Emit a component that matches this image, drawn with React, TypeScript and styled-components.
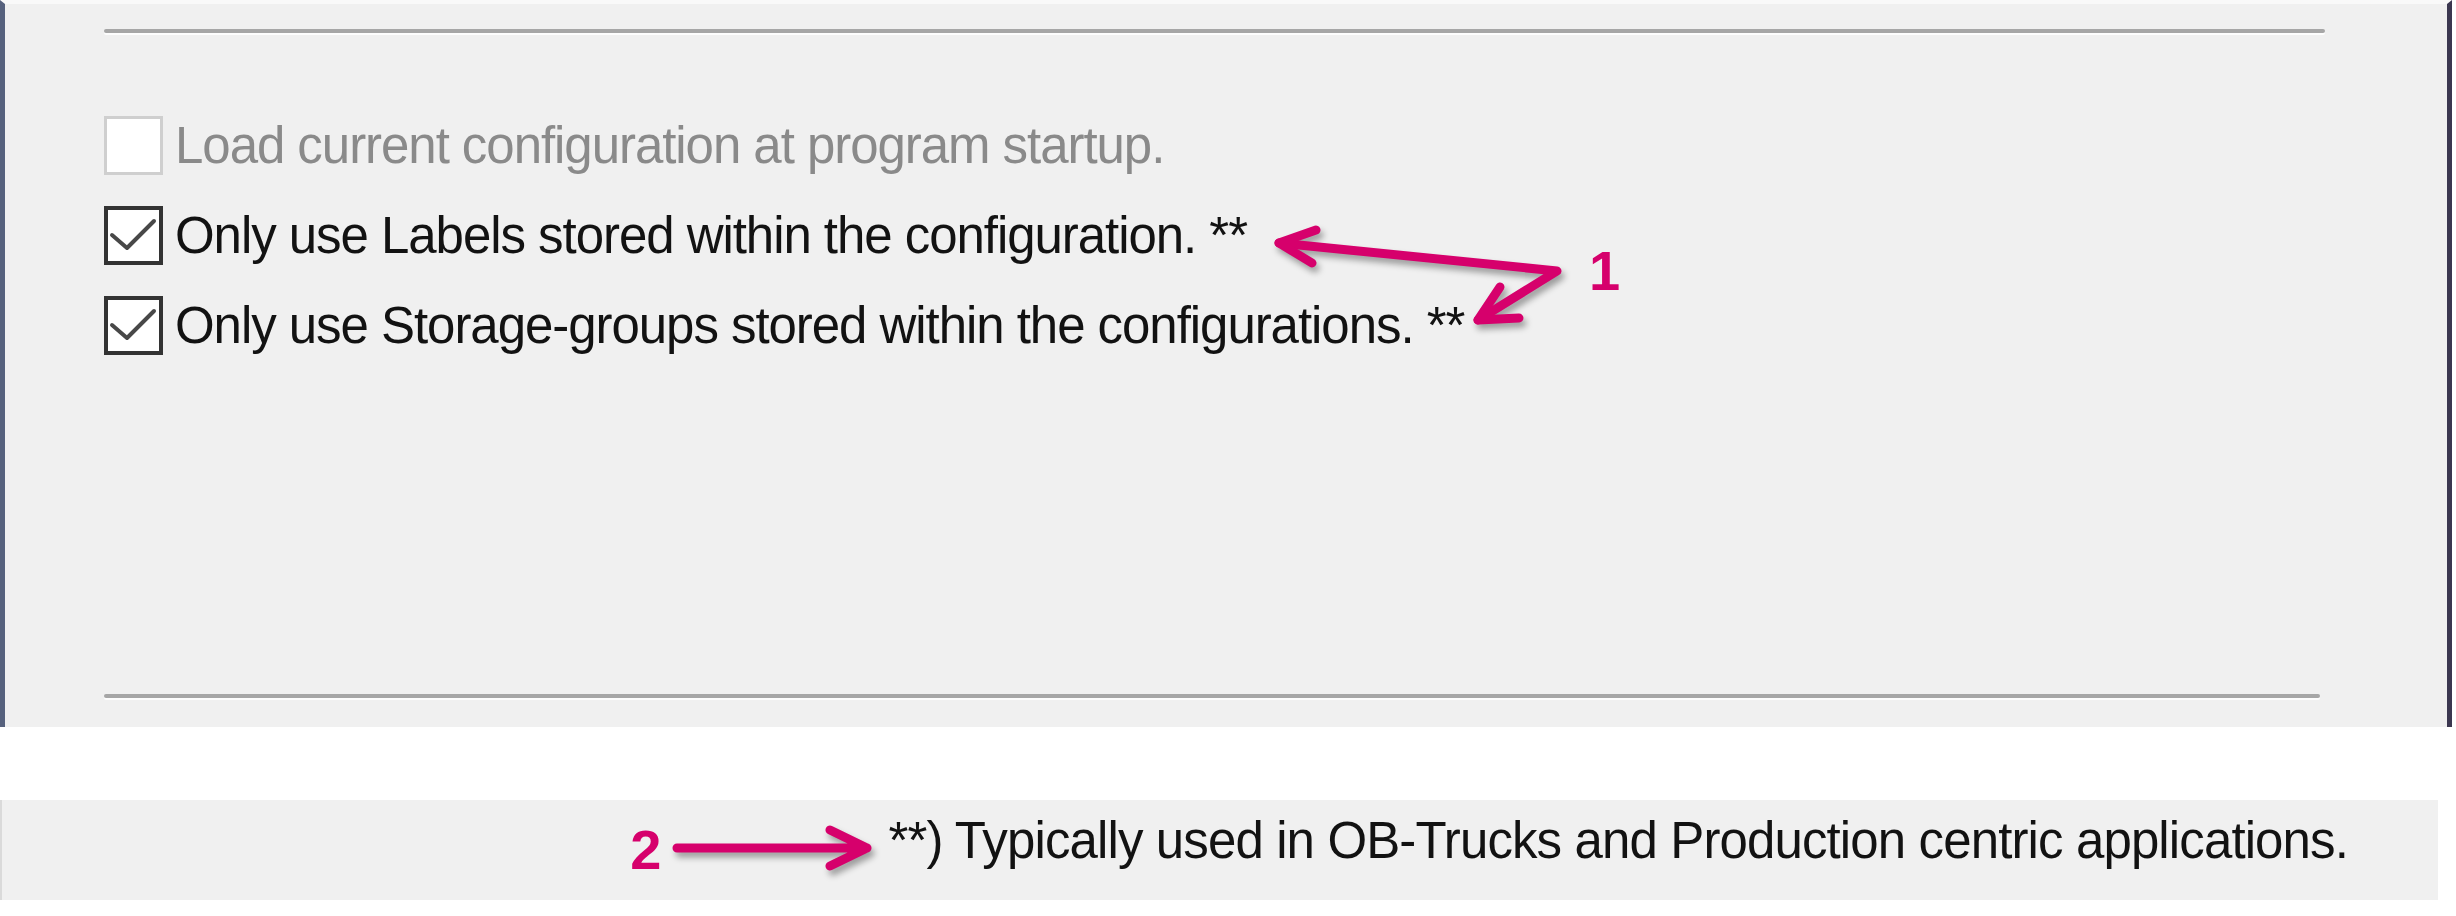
import styled, { createGlobalStyle } from "styled-components";

const ACCENT = "#d6006c";

const GlobalStyle = createGlobalStyle`
  html, body {
    margin: 0;
    padding: 0;
    background: #ffffff;
  }
  body {
    font-family: "Liberation Sans", Arial, sans-serif;
  }
`;

const Page = styled.div`
  width: 2456px;
  height: 916px;
  display: flex;
  flex-direction: column;
  gap: 73px;
  overflow: hidden;
`;

const Panel = styled.section`
  position: relative;
  box-sizing: border-box;
  width: 2452px;
  height: 727px;
  display: flex;
  flex-direction: column;
  padding: 25px 122px 29px 99px;
  background: #f0f0f0;
  border-top: 4px solid #f9f9f9;
  border-left: 5px solid #56617d;
  border-right: 5px solid #3b3750;
`;

const Separator = styled.hr<{ $trim?: number }>`
  margin: 0 ${(p) => p.$trim ?? 0}px 0 0;
  height: 4px;
  border: 0;
  border-radius: 2px;
  background: #a6a6a6;
  box-shadow: 0 2px 0 #fdfdfd;
`;

const OptionList = styled.ul`
  list-style: none;
  margin: 67px 0 0;
  padding: 0;
  display: flex;
  flex-direction: column;
  flex: 1;
`;

const Option = styled.li`
  height: 90px;
  display: flex;
  align-items: center;
  gap: 12px;
`;

const Box = styled.span<{ $disabled?: boolean }>`
  box-sizing: border-box;
  flex: none;
  width: 59px;
  height: 59px;
  display: flex;
  background: #ffffff;
  border: ${(p) => (p.$disabled ? "3px solid #cfcfcf" : "4px solid #333333")};
`;

const Tick = styled.svg`
  width: 100%;
  height: 100%;
`;

const Label = styled.span<{ $disabled?: boolean }>`
  font-size: 51px;
  letter-spacing: -1.05px;
  white-space: nowrap;
  color: ${(p) => (p.$disabled ? "#8a8a8a" : "#121212")};
`;

const Marker = styled.span`
  font-weight: 700;
  font-size: 56px;
  line-height: 1;
  color: ${ACCENT};
`;

const CalloutNumber = styled(Marker)`
  position: absolute;
  left: 1584px;
  top: 239px;
`;

const CalloutArrows = styled.svg`
  position: absolute;
  left: 1250px;
  top: 211px;
  overflow: visible;
  filter: drop-shadow(3px 5px 3px rgba(0, 0, 0, 0.35));
`;

const FootnoteBar = styled.footer`
  box-sizing: border-box;
  width: 2438px;
  height: 100px;
  display: flex;
  align-items: center;
  justify-content: flex-end;
  gap: 11px;
  padding-right: 90px;
  background: #f0f0f0;
  border-left: 2px solid #dadada;
`;

const FootArrow = styled.svg`
  flex: none;
  overflow: visible;
  filter: drop-shadow(3px 5px 3px rgba(0, 0, 0, 0.35));
`;

const FootnoteText = styled.span`
  font-size: 51px;
  line-height: 1;
  letter-spacing: -0.88px;
  white-space: nowrap;
  color: #121212;
  margin-bottom: 19px;
`;

const options = [
  { text: "Load current configuration at program startup.", checked: false, disabled: true },
  { text: "Only use Labels stored within the configuration. **", checked: true, disabled: false },
  { text: "Only use Storage-groups stored within the configurations. **", checked: true, disabled: false },
];

function Checkbox({ checked, disabled }: { checked: boolean; disabled: boolean }) {
  return (
    <Box $disabled={disabled}>
      {checked && (
        <Tick viewBox="0 0 51 51">
          <polyline
            points="4,25 19,38 46,11"
            fill="none"
            stroke="#484848"
            strokeWidth="4"
            strokeLinecap="round"
            strokeLinejoin="round"
          />
        </Tick>
      )}
    </Box>
  );
}

export default function App() {
  return (
    <>
      <GlobalStyle />
      <Page>
        <Panel>
          <Separator />
          <OptionList>
            {options.map((o) => (
              <Option key={o.text}>
                <Checkbox checked={o.checked} disabled={o.disabled} />
                <Label $disabled={o.disabled}>{o.text}</Label>
              </Option>
            ))}
          </OptionList>
          <Separator $trim={5} />

          <CalloutArrows width="310" height="130" viewBox="0 0 310 130">
            <g fill="none" stroke={ACCENT} strokeWidth="9" strokeLinecap="round" strokeLinejoin="round">
              <path d="M24 28 L302 56 L223 105" />
              <path d="M61 15 L24 28 L57 48" />
              <path d="M245 72 L223 105 L264 103" />
            </g>
          </CalloutArrows>
          <CalloutNumber>1</CalloutNumber>
        </Panel>

        <FootnoteBar>
          <Marker>2</Marker>
          <FootArrow width="205" height="52" viewBox="0 0 205 52">
            <path
              d="M5 24 H195 M158 6 L195 24 L158 42"
              fill="none"
              stroke={ACCENT}
              strokeWidth="9"
              strokeLinecap="round"
              strokeLinejoin="round"
            />
          </FootArrow>
          <FootnoteText>**) Typically used in OB-Trucks and Production centric applications.</FootnoteText>
        </FootnoteBar>
      </Page>
    </>
  );
}
